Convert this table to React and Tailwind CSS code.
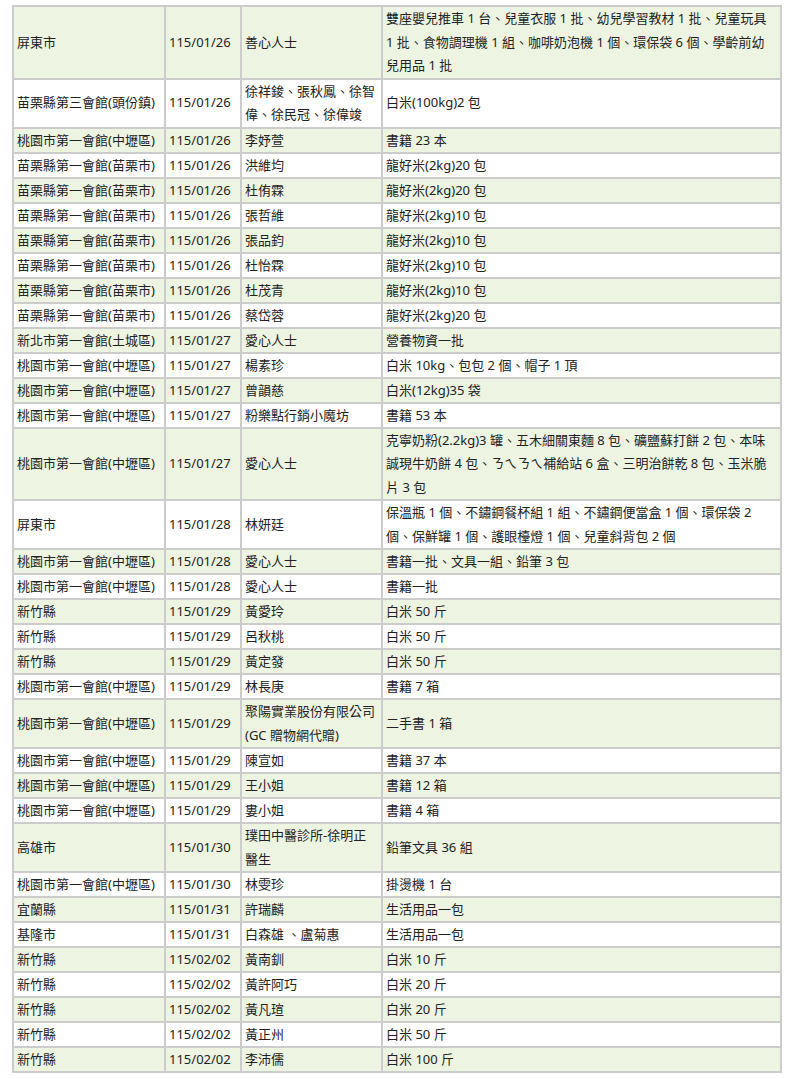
import React from 'react'

const TY = '桃園市第一會館(中壢區)'
const ML = '苗栗縣第一會館(苗栗市)'
const HC = '新竹縣'

// note: multi-line cells are given as arrays so the line breaks match the source page
const rows = [
  ['屏東市', '115/01/26', '善心人士', ['雙座嬰兒推車 1 台、兒童衣服 1 批、幼兒學習教材 1 批、兒童玩具', '1 批、食物調理機 1 組、咖啡奶泡機 1 個、環保袋 6 個、學齡前幼', '兒用品 1 批']],
  ['苗栗縣第三會館(頭份鎮)', '115/01/26', ['徐祥鋑、張秋鳳、徐智', '偉、徐民冠、徐偉竣'], '白米(100kg)2 包'],
  [TY, '115/01/26', '李妤萱', '書籍 23 本'],
  [ML, '115/01/26', '洪維均', '龍好米(2kg)20 包'],
  [ML, '115/01/26', '杜侑霖', '龍好米(2kg)20 包'],
  [ML, '115/01/26', '張哲維', '龍好米(2kg)10 包'],
  [ML, '115/01/26', '張品鈞', '龍好米(2kg)10 包'],
  [ML, '115/01/26', '杜怡霖', '龍好米(2kg)10 包'],
  [ML, '115/01/26', '杜茂青', '龍好米(2kg)10 包'],
  [ML, '115/01/26', '蔡岱蓉', '龍好米(2kg)20 包'],
  ['新北市第一會館(土城區)', '115/01/27', '愛心人士', '營養物資一批'],
  [TY, '115/01/27', '楊素珍', '白米 10kg、包包 2 個、帽子 1 頂'],
  [TY, '115/01/27', '曾韻慈', '白米(12kg)35 袋'],
  [TY, '115/01/27', '粉樂點行銷小魔坊', '書籍 53 本'],
  [TY, '115/01/27', '愛心人士', ['克寧奶粉(2.2kg)3 罐、五木細關東麵 8 包、礦鹽蘇打餅 2 包、本味', '誠現牛奶餅 4 包、ㄋㄟㄋㄟ補給站 6 盒、三明治餅乾 8 包、玉米脆', '片 3 包']],
  ['屏東市', '115/01/28', '林妍廷', ['保溫瓶 1 個、不鏽鋼餐杯組 1 組、不鏽鋼便當盒 1 個、環保袋 2', '個、保鮮罐 1 個、護眼檯燈 1 個、兒童斜背包 2 個']],
  [TY, '115/01/28', '愛心人士', '書籍一批、文具一組、鉛筆 3 包'],
  [TY, '115/01/28', '愛心人士', '書籍一批'],
  [HC, '115/01/29', '黃愛玲', '白米 50 斤'],
  [HC, '115/01/29', '呂秋桃', '白米 50 斤'],
  [HC, '115/01/29', '黃定發', '白米 50 斤'],
  [TY, '115/01/29', '林長庚', '書籍 7 箱'],
  [TY, '115/01/29', ['聚陽實業股份有限公司', '(GC 贈物網代贈)'], '二手書 1 箱'],
  [TY, '115/01/29', '陳宣如', '書籍 37 本'],
  [TY, '115/01/29', '王小姐', '書籍 12 箱'],
  [TY, '115/01/29', '婁小姐', '書籍 4 箱'],
  ['高雄市', '115/01/30', ['璞田中醫診所-徐明正', '醫生'], '鉛筆文具 36 組'],
  [TY, '115/01/30', '林雯珍', '掛燙機 1 台'],
  ['宜蘭縣', '115/01/31', '許瑞麟', '生活用品一包'],
  ['基隆市', '115/01/31', '白森雄 、盧菊惠', '生活用品一包'],
  [HC, '115/02/02', '黃南釧', '白米 10 斤'],
  [HC, '115/02/02', '黃許阿巧', '白米 20 斤'],
  [HC, '115/02/02', '黃凡瑄', '白米 20 斤'],
  [HC, '115/02/02', '黃正州', '白米 50 斤'],
  [HC, '115/02/02', '李沛儒', '白米 100 斤'],
]

const Cell = ({ value, tall }) => (
  <td className={`border-2 border-[#cccccc] px-[3px] py-0 align-middle ${tall ? 'leading-[23.5px]' : 'leading-[23px]'}`}>
    {Array.isArray(value)
      ? value.map((line, i) => (
          <React.Fragment key={i}>
            {i > 0 && <br />}
            {line}
          </React.Fragment>
        ))
      : value}
  </td>
)

export default function App() {
  return (
    <div className="bg-white min-h-screen pl-[12px] pt-[5px]">
      <table
        className="table-fixed border-collapse w-[768px] text-[13px] text-[#222222]"
        style={{ fontFamily: '"Noto Sans", "Noto Sans CJK TC", sans-serif' }}
      >
        <colgroup>
          <col className="w-[152px]" />
          <col className="w-[76px]" />
          <col className="w-[141px]" />
          <col className="w-[399px]" />
        </colgroup>
        <tbody>
          {rows.map((row, i) => {
            const tall = row.some(v => Array.isArray(v))
            return (
              <tr key={i} className={i % 2 === 0 ? 'bg-[#edf5e2]' : 'bg-white'}>
                {row.map((v, j) => (
                  <Cell key={j} value={v} tall={tall} />
                ))}
              </tr>
            )
          })}
        </tbody>
      </table>
    </div>
  )
}
